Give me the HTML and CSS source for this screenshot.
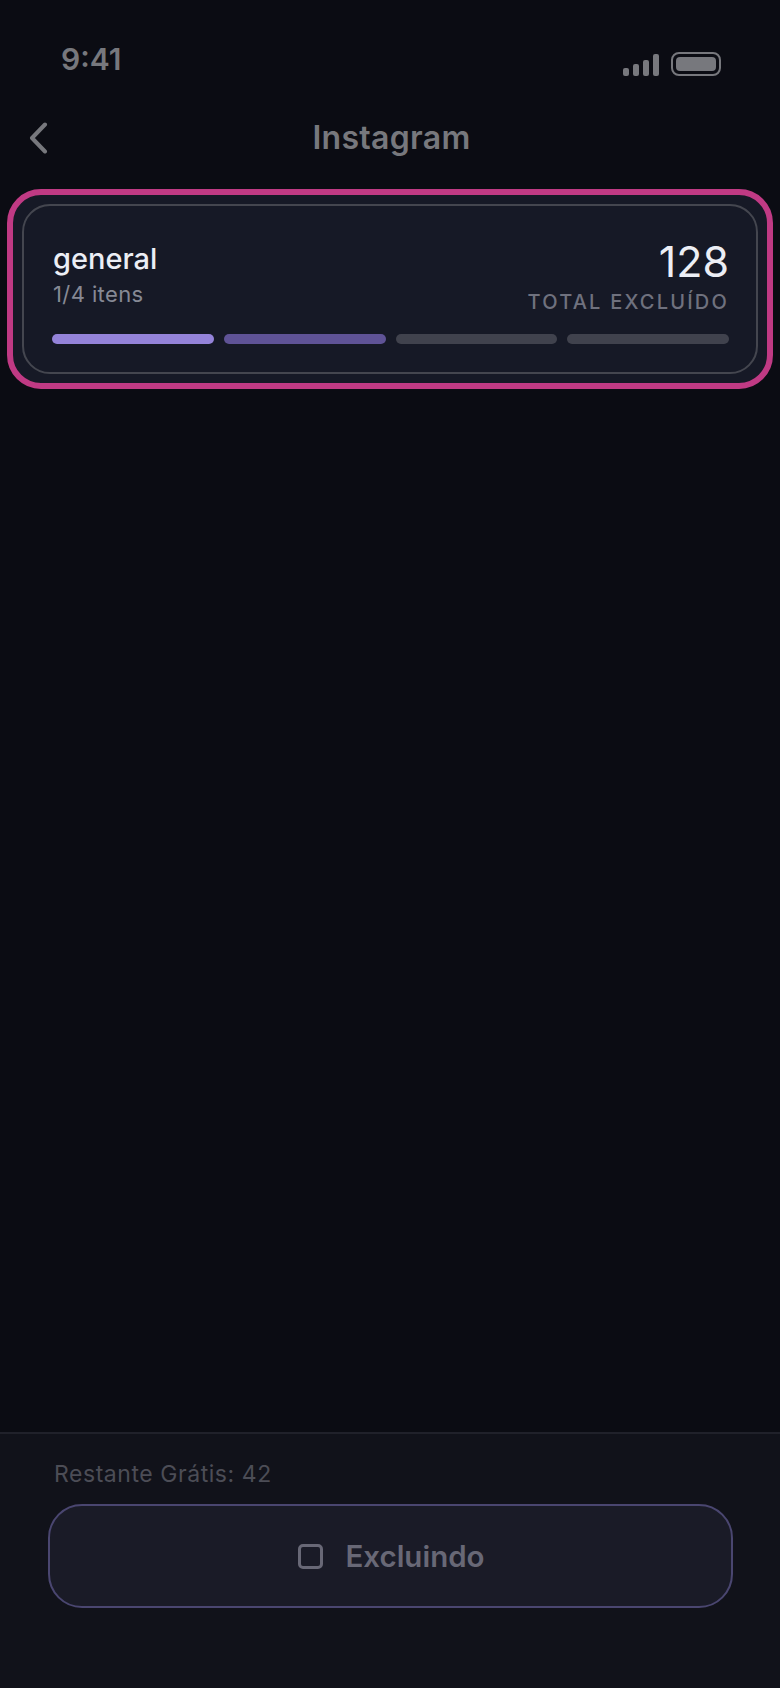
FILE: index.html
```html
<!DOCTYPE html>
<html lang="pt-BR">
<head>
    <meta charset="UTF-8">
    <meta name="viewport" content="width=device-width, initial-scale=1.0">
    <title>Instagram</title>
    <link rel="stylesheet" href="styles.css">
</head>
<body>
    <div class="screen">
        <!-- Status bar -->
        <div class="status">
            <span class="time">9:41</span>
            <div class="status-icons">
                <div class="signal">
                    <span class="sig1"></span>
                    <span class="sig2"></span>
                    <span class="sig3"></span>
                    <span class="sig4"></span>
                </div>
                <div class="battery"><span></span></div>
            </div>
        </div>

        <!-- Header -->
        <div class="header">
            <svg class="back" width="20" height="32" viewBox="0 0 20 32" fill="none">
                <path d="M17 2.5 L4 16 L17 29.5" stroke="#77787d" stroke-width="4" stroke-linecap="round" stroke-linejoin="round"/>
            </svg>
            <h1>Instagram</h1>
        </div>

        <!-- Highlighted card -->
        <div class="highlight">
            <div class="card">
                <div class="card-top">
                    <div class="info">
                        <div class="name">general</div>
                        <div class="count">1/4 itens</div>
                    </div>
                    <div class="totals">
                        <div class="number">128</div>
                        <div class="label">TOTAL EXCLUÍDO</div>
                    </div>
                </div>
                <div class="bars">
                    <span class="bar done"></span>
                    <span class="bar active"></span>
                    <span class="bar"></span>
                    <span class="bar"></span>
                </div>
            </div>
        </div>

        <!-- Footer -->
        <div class="footer">
            <p class="free">Restante Grátis: 42</p>
            <button class="delete" type="button">
                <span class="stop"></span>
                Excluindo
            </button>
        </div>
    </div>
</body>
</html>
```

FILE: styles.css
```css
* {
    box-sizing: border-box;
}
body {
    margin: 0;
    background: #0b0c13;
    font-family: Inter, "Liberation Sans", sans-serif;
}
.screen {
    display: flex;
    flex-direction: column;
    height: 1688px;
}
.status {
    display: flex;
    justify-content: space-between;
    align-items: flex-start;
    height: 106px;
    padding: 41px 59px 0 61px;
}
.time {
    font-size: 30px;
    line-height: 36px;
    font-weight: 600;
    color: #77787d;
}
.status-icons {
    display: flex;
    align-items: flex-end;
    gap: 12px;
    margin-top: 11px;
}
.signal {
    display: flex;
    align-items: flex-end;
    gap: 4px;
    height: 24px;
}
.signal span {
    width: 6px;
    border-radius: 2px;
    background: #77787d;
}
.sig1 { height: 8px; }
.sig2 { height: 12px; }
.sig3 { height: 16px; }
.sig4 { height: 22px; }
.battery {
    width: 50px;
    height: 24px;
    padding: 3px;
    border: 2px solid #77787d;
    border-radius: 8px;
}
.battery span {
    display: block;
    height: 100%;
    border-radius: 4px;
    background: #77787d;
}
.header {
    position: relative;
    display: flex;
    justify-content: center;
    align-items: center;
    height: 64px;
    padding-left: 3px;
}
.header h1 {
    margin: 0;
    font-size: 32px;
    line-height: 64px;
    font-weight: 600;
    letter-spacing: 0.3px;
    color: #77787d;
}
.back {
    position: absolute;
    left: 28px;
    top: 16px;
}
.highlight {
    margin: 19px 7px 0 7px;
    padding: 9px;
    border: 6px solid #c03a84;
    border-radius: 34px;
    background: #161926;
}
.card {
    height: 170px;
    padding: 29px 27px 0 28px;
    border: 2px solid #44464f;
    border-radius: 28px;
}
.card-top {
    display: flex;
    justify-content: space-between;
    align-items: flex-start;
    height: 99px;
}
.info {
    margin-left: 1px;
}
.name {
    margin-top: 6px;
    font-size: 29px;
    line-height: 36px;
    font-weight: 500;
    color: #eceef5;
}
.count {
    margin-top: 2px;
    font-size: 22px;
    line-height: 30px;
    letter-spacing: 0.4px;
    color: #868995;
}
.totals {
    text-align: right;
}
.number {
    font-size: 43px;
    line-height: 52px;
    font-weight: 400;
    color: #eceef5;
}
.label {
    margin-top: 2px;
    font-size: 20px;
    line-height: 26px;
    font-weight: 500;
    letter-spacing: 2.2px;
    color: #6f717e;
}
.bars {
    display: flex;
    gap: 10px;
}
.bar {
    flex: 1;
    height: 10px;
    border-radius: 5px;
    background: #40424d;
}
.bar.done {
    background: #9483d9;
}
.bar.active {
    background: #5f5396;
}
.footer {
    margin-top: auto;
    height: 256px;
    padding: 24px 47px 0 48px;
    border-top: 2px solid #20212a;
    background: #11121a;
}
.free {
    margin: 0 0 0 6px;
    font-size: 23px;
    line-height: 32px;
    letter-spacing: 0.55px;
    color: #4c4d56;
}
.delete {
    display: flex;
    justify-content: center;
    align-items: center;
    gap: 22px;
    width: 685px;
    height: 104px;
    margin-top: 14px;
    padding: 0 0 0 2px;
    border: 2px solid #4a4670;
    border-radius: 34px;
    background: #1a1b27;
    font-family: inherit;
    font-size: 29.5px;
    font-weight: 600;
    color: #686876;
}
.stop {
    width: 25px;
    height: 25px;
    border: 3px solid #686876;
    border-radius: 5px;
}
```
